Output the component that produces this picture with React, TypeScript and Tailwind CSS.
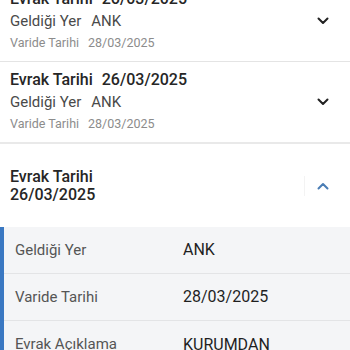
import React from "react";

function ChevronDown() {
  return (
    <svg width="12" height="8" viewBox="0 0 12 8" fill="none">
      <path d="M1.5 1.5 L6 6 L10.5 1.5" stroke="#222" strokeWidth="2" strokeLinecap="round" strokeLinejoin="round" />
    </svg>
  );
}

function ChevronUp() {
  return (
    <svg width="12" height="8" viewBox="0 0 12 8" fill="none">
      <path d="M1.5 6.5 L6 2 L10.5 6.5" stroke="#4a7db5" strokeWidth="2" strokeLinecap="round" strokeLinejoin="round" />
    </svg>
  );
}

function Collapsed({ last }: { last?: boolean }) {
  return (
    <div
      className={`flex h-[82px] items-center justify-between pl-[10px] pr-[21px] ${
        last ? "border-b-2 border-[#e9e9e9]" : "border-b border-[#e4e4e4]"
      }`}
    >
      <div className="flex flex-col">
        <div className="flex gap-[9px] text-[16px] font-medium leading-[22px] text-[#262626]">
          <span>Evrak Tarihi</span>
          <span>26/03/2025</span>
        </div>
        <div className="flex gap-[10px] text-[15px] leading-[22px] text-[#4a4a4a]">
          <span>Geldiği Yer</span>
          <span>ANK</span>
        </div>
        <div className="flex gap-[9px] text-[12.5px] leading-[22px] text-[#8c8c8c]">
          <span>Varide Tarihi</span>
          <span>28/03/2025</span>
        </div>
      </div>
      <ChevronDown />
    </div>
  );
}

function Row({ label, value, last }: { label: string; value: string; last?: boolean }) {
  return (
    <div
      className={`grid h-[47px] grid-cols-[168px_1fr] items-center pl-[11px] ${
        last ? "" : "border-b border-[#e3e4e6]"
      }`}
    >
      <span className="text-[15px] text-[#555]">{label}</span>
      <span className="text-[16px] text-[#1f1f1f]">{value}</span>
    </div>
  );
}

export default function App() {
  return (
    <div className="h-[350px] w-[350px] overflow-hidden bg-white font-['Roboto',sans-serif]">
      <div className="-mt-[20px]">
        <Collapsed />
        <Collapsed last />
        <div className="flex h-[83px] items-center justify-between pl-[10px] pr-[21px]">
          <div className="flex flex-col text-[16px] font-medium leading-[18px] text-[#262626]">
            <span>Evrak Tarihi</span>
            <span>26/03/2025</span>
          </div>
          <div className="flex items-center gap-[12px]">
            <div className="h-[20px] w-px bg-[#f3f3f3]" />
            <ChevronUp />
          </div>
        </div>
        <div className="border-l-4 border-[#3a78c2] bg-[#f4f5f7]">
          <Row label="Geldiği Yer" value="ANK" />
          <Row label="Varide Tarihi" value="28/03/2025" />
          <Row label="Evrak Açıklama" value="KURUMDAN" last />
        </div>
      </div>
    </div>
  );
}
